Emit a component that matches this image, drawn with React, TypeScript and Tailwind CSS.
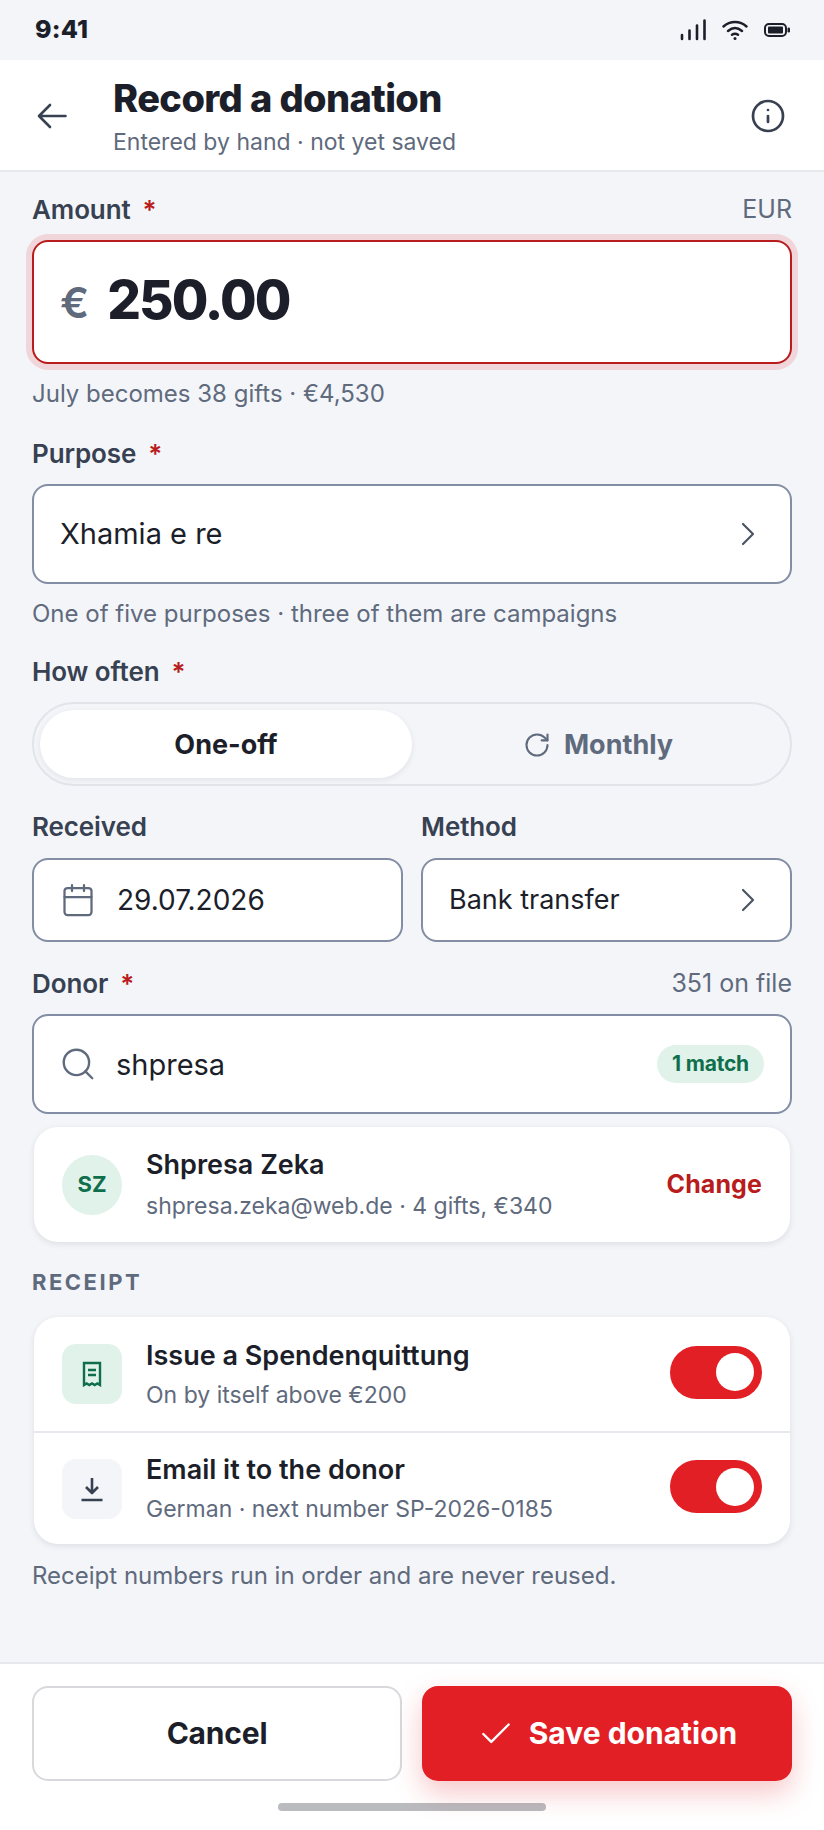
import React from "react";
import { Info, Calendar, RotateCw, Search, Check } from "lucide-react";

const font = { fontFamily: "Inter, sans-serif" };

function Label({ children, req, right }: { children: React.ReactNode; req?: boolean; right?: string }) {
  return (
    <div className="flex items-center justify-between h-[24px]">
      <div className="pt-[2px] text-[26px] font-semibold text-[#374151] leading-[24px] tracking-[-0.1px]">
        {children}
        {req && <span className="text-[#b91c1c] ml-[12px]">*</span>}
      </div>
      {right && <div className="text-[25px] text-[#5f6a7d] leading-[24px]">{right}</div>}
    </div>
  );
}

function Hint({ children }: { children: React.ReactNode }) {
  return <div className="text-[24px] text-[#5f6a7d] leading-[22px] whitespace-nowrap">{children}</div>;
}

function Chevron() {
  return (
    <svg width="16" height="24" viewBox="0 0 16 24" fill="none" stroke="#4b5563" strokeWidth="2.2" strokeLinecap="round" strokeLinejoin="round">
      <path d="M3 2l10 10L3 22" />
    </svg>
  );
}

function Toggle() {
  return (
    <div className="w-[92px] h-[53px] mb-[4px] rounded-full bg-[#e31f26] flex items-center justify-end pr-[8px] shrink-0">
      <div className="w-[38px] h-[38px] rounded-full bg-white" />
    </div>
  );
}

function Row({ icon, bg, title, sub, h }: { icon: React.ReactNode; bg: string; title: string; sub: string; h: string }) {
  return (
    <div className={`flex items-center px-[28px] ${h}`}>
      <div className={`w-[60px] h-[60px] rounded-[14px] flex items-center justify-center shrink-0 ${bg}`}>{icon}</div>
      <div className="ml-[24px] flex-1">
        <div className="text-[27px] font-semibold text-[#1c1f2a] leading-[30px]">{title}</div>
        <div className="text-[23px] text-[#5f6a7d] leading-[26px] mt-[11px]">{sub}</div>
      </div>
      <Toggle />
    </div>
  );
}

export default function App() {
  return (
    <div style={font} className="w-[824px] h-[1830px] bg-[#f3f5f9] flex flex-col overflow-hidden">
      <div className="h-[60px] flex items-center justify-between pl-[35px] pr-[34px] shrink-0">
        <span className="text-[25px] font-extrabold text-[#1c1f2a] tracking-[0.2px]">9:41</span>
        <div className="flex items-center gap-[16px]">
          <svg width="26" height="22" viewBox="0 0 26 22" fill="none" stroke="#1c1f2a" strokeWidth="2.6" strokeLinecap="round">
            <path d="M2 16v4M9.500 11.500v8.500M17 6.500v13.500M24.500 1.500v18.500" />
          </svg>
          <svg width="26" height="20" viewBox="0 0 26 20" fill="none" stroke="#1c1f2a" strokeWidth="2.4" strokeLinecap="round">
            <path d="M1.500 6.500c6.500-6 16.500-6 23 0M6 11c4.500-3.800 9.500-3.800 14 0M10 14.800c2-1.500 4-1.500 6 0" />
            <circle cx="13" cy="18.500" r="1.500" fill="#1c1f2a" stroke="none" />
          </svg>
          <svg width="26" height="14" viewBox="0 0 26 14" fill="none">
            <rect x="1" y="1" width="21" height="12" rx="4" stroke="#1c1f2a" strokeWidth="2" />
            <rect x="4" y="3.500" width="15" height="7" rx="1" fill="#1c1f2a" />
            <rect x="23.500" y="4.500" width="2.500" height="5" rx="1.200" fill="#1c1f2a" />
          </svg>
        </div>
      </div>

      <div className="h-[112px] bg-white border-b-2 border-[#e8e9ee] flex items-center pl-[37px] pr-[38px] shrink-0">
        <svg width="30" height="26" viewBox="0 0 30 26" fill="none" stroke="#374151" strokeWidth="2.6" strokeLinecap="round" strokeLinejoin="round" className="shrink-0 mt-[2px]">
          <path d="M28.500 13H2M13 2L2 13l11 11" />
        </svg>
        <div className="ml-[46px] flex-1">
          <div className="text-[38px] font-extrabold text-[#1c1f2a] leading-[44px] tracking-[-0.6px]">Record a donation</div>
          <div className="text-[23px] text-[#5f6a7d] leading-[26px] mt-[9px]">Entered by hand · not yet saved</div>
        </div>
        <Info size={36} strokeWidth={1.8} className="text-[#374151] mt-[2px]" />
      </div>

      <div className="flex-1 px-[32px] pt-[25px] flex flex-col">
        <Label req right="EUR">Amount</Label>
        <div className="mt-[19px] h-[124px] rounded-[16px] bg-white border-2 border-[#b91c1c] shadow-[0_0_0_6px_rgba(227,31,38,0.15)] flex items-center px-[26px]">
          <span className="text-[43px] font-semibold text-[#5f6a7d] mr-[18px]">€</span>
          <span className="text-[53px] font-extrabold text-[#1c1f2a] tracking-[-1.9px] -mt-[2px]">250.00</span>
        </div>
        <div className="mt-[19px]"><Hint>July becomes 38 gifts · €4,530</Hint></div>

        <div className="mt-[36px]"><Label req>Purpose</Label></div>
        <div className="mt-[19px] h-[100px] rounded-[16px] bg-white border-2 border-[#838da3] flex items-center justify-between pl-[26px] pr-[34px]">
          <span className="text-[29px] text-[#1c1f2a]">Xhamia e re</span>
          <Chevron />
        </div>
        <div className="mt-[19px]"><Hint>One of five purposes · three of them are campaigns</Hint></div>

        <div className="mt-[34px]"><Label req>How often</Label></div>
        <div className="mt-[19px] h-[84px] rounded-full bg-[#f3f5f9] border-2 border-[#e2e4ea] flex items-center pl-[6px] pr-[6px]">
          <div className="w-[372px] h-[68px] rounded-full bg-white shadow-[0_2px_6px_rgba(28,31,42,0.08)] flex items-center justify-center text-[27px] font-bold text-[#1c1f2a] pt-[2px]">One-off</div>
          <div className="flex-1 flex items-center justify-center gap-[13px] text-[27px] font-bold text-[#5f6a7d] pt-[2px]">
            <RotateCw size={28} strokeWidth={1.8} />
            Monthly
          </div>
        </div>

        <div className="mt-[28px] grid grid-cols-2 gap-x-[18px]">
          <Label>Received</Label>
          <Label>Method</Label>
          <div className="mt-[20px] h-[84px] rounded-[16px] bg-white border-2 border-[#838da3] flex items-center pl-[26px]">
            <Calendar size={36} strokeWidth={1.5} className="text-[#5f6a7d]" />
            <span className="ml-[21px] text-[28px] text-[#1c1f2a]">29.07.2026</span>
          </div>
          <div className="mt-[20px] h-[84px] rounded-[16px] bg-white border-2 border-[#838da3] flex items-center justify-between pl-[26px] pr-[34px]">
            <span className="text-[27px] text-[#1c1f2a]">Bank transfer</span>
            <Chevron />
          </div>
        </div>

        <div className="mt-[29px]"><Label req right="351 on file">Donor</Label></div>
        <div className="mt-[19px] h-[100px] rounded-[16px] bg-white border-2 border-[#838da3] flex items-center pl-[26px] pr-[26px]">
          <Search size={38} strokeWidth={1.5} className="text-[#5f6a7d] -ml-[1px]" />
          <span className="ml-[19px] text-[29px] text-[#1c1f2a] flex-1 pt-[2px]">shpresa</span>
          <span className="h-[38px] w-[107px] rounded-full bg-[#e0f2ea] text-[#0f6f4c] text-[21px] font-bold flex items-center justify-center tracking-[-0.2px]">1 match</span>
        </div>
        <div className="mt-[13px] mx-[2px] h-[115px] rounded-[24px] bg-white shadow-[0_2px_6px_rgba(28,31,42,0.1)] flex items-center px-[28px]">
          <div className="w-[60px] h-[60px] rounded-full bg-[#e0f2ea] text-[#0f6f4c] text-[22px] font-bold flex items-center justify-center shrink-0">SZ</div>
          <div className="ml-[24px] flex-1">
            <div className="text-[27px] font-semibold text-[#1c1f2a] leading-[32px]">Shpresa Zeka</div>
            <div className="text-[23px] text-[#5f6a7d] leading-[30px] mt-[10px]">shpresa.zeka@web.de · 4 gifts, €340</div>
          </div>
          <span className="text-[25px] font-bold text-[#b91c1c] tracking-[0.1px]">Change</span>
        </div>

        <div className="mt-[27px] text-[22px] font-bold tracking-[2.5px] text-[#5f6a7d] leading-[26px]">RECEIPT</div>
        <div className="mt-[22px] mx-[2px] rounded-[24px] bg-white shadow-[0_2px_6px_rgba(28,31,42,0.1)] overflow-hidden">
          <Row h="h-[114px]" bg="bg-[#e0f2ea]" title="Issue a Spendenquittung" sub="On by itself above €200" icon={
            <svg width="20" height="26" viewBox="0 0 20 26" fill="none" stroke="#0f6f4c" strokeWidth="2.4">
              <path d="M2 2h16v22l-2.700-1.600L12.700 24 10 22.400 7.300 24l-2.700-1.600L2 24z" />
              <path d="M6 9h8M6 14h8" />
            </svg>} />
          <div className="h-[2px] bg-[#e8e9ee]" />
          <Row h="h-[111px]" bg="bg-[#f3f5f9]" title="Email it to the donor" sub="German · next number SP-2026-0185" icon={
            <svg width="24" height="26" viewBox="0 0 24 26" fill="none" stroke="#374151" strokeWidth="2.6" strokeLinejoin="round">
              <path d="M12 2v15M6 11l6 6 6-6M1.500 24h21" />
            </svg>} />
        </div>
        <div className="mt-[21px]"><Hint>Receipt numbers run in order and are never reused.</Hint></div>
      </div>

      <div className="h-[168px] bg-white border-t-2 border-[#e8e9ee] shrink-0 px-[32px] pt-[22px] relative">
        <div className="flex gap-[20px]">
          <div className="w-[370px] h-[95px] rounded-[16px] border-2 border-[#d8d9dd] flex items-center justify-center text-[30px] font-bold text-[#1c1f2a] tracking-[-0.2px]">Cancel</div>
          <div className="w-[370px] h-[95px] rounded-[16px] bg-[#e31f26] shadow-[0_12px_28px_rgba(227,31,38,0.25)] flex items-center justify-center gap-[14px] text-[30px] font-bold text-white">
            <Check size={38} strokeWidth={1.5} />
            Save donation
          </div>
        </div>
        <div className="absolute left-[278px] top-[139px] w-[268px] h-[8px] rounded-full bg-[#1c1f2a]/30" />
      </div>
    </div>
  );
}
